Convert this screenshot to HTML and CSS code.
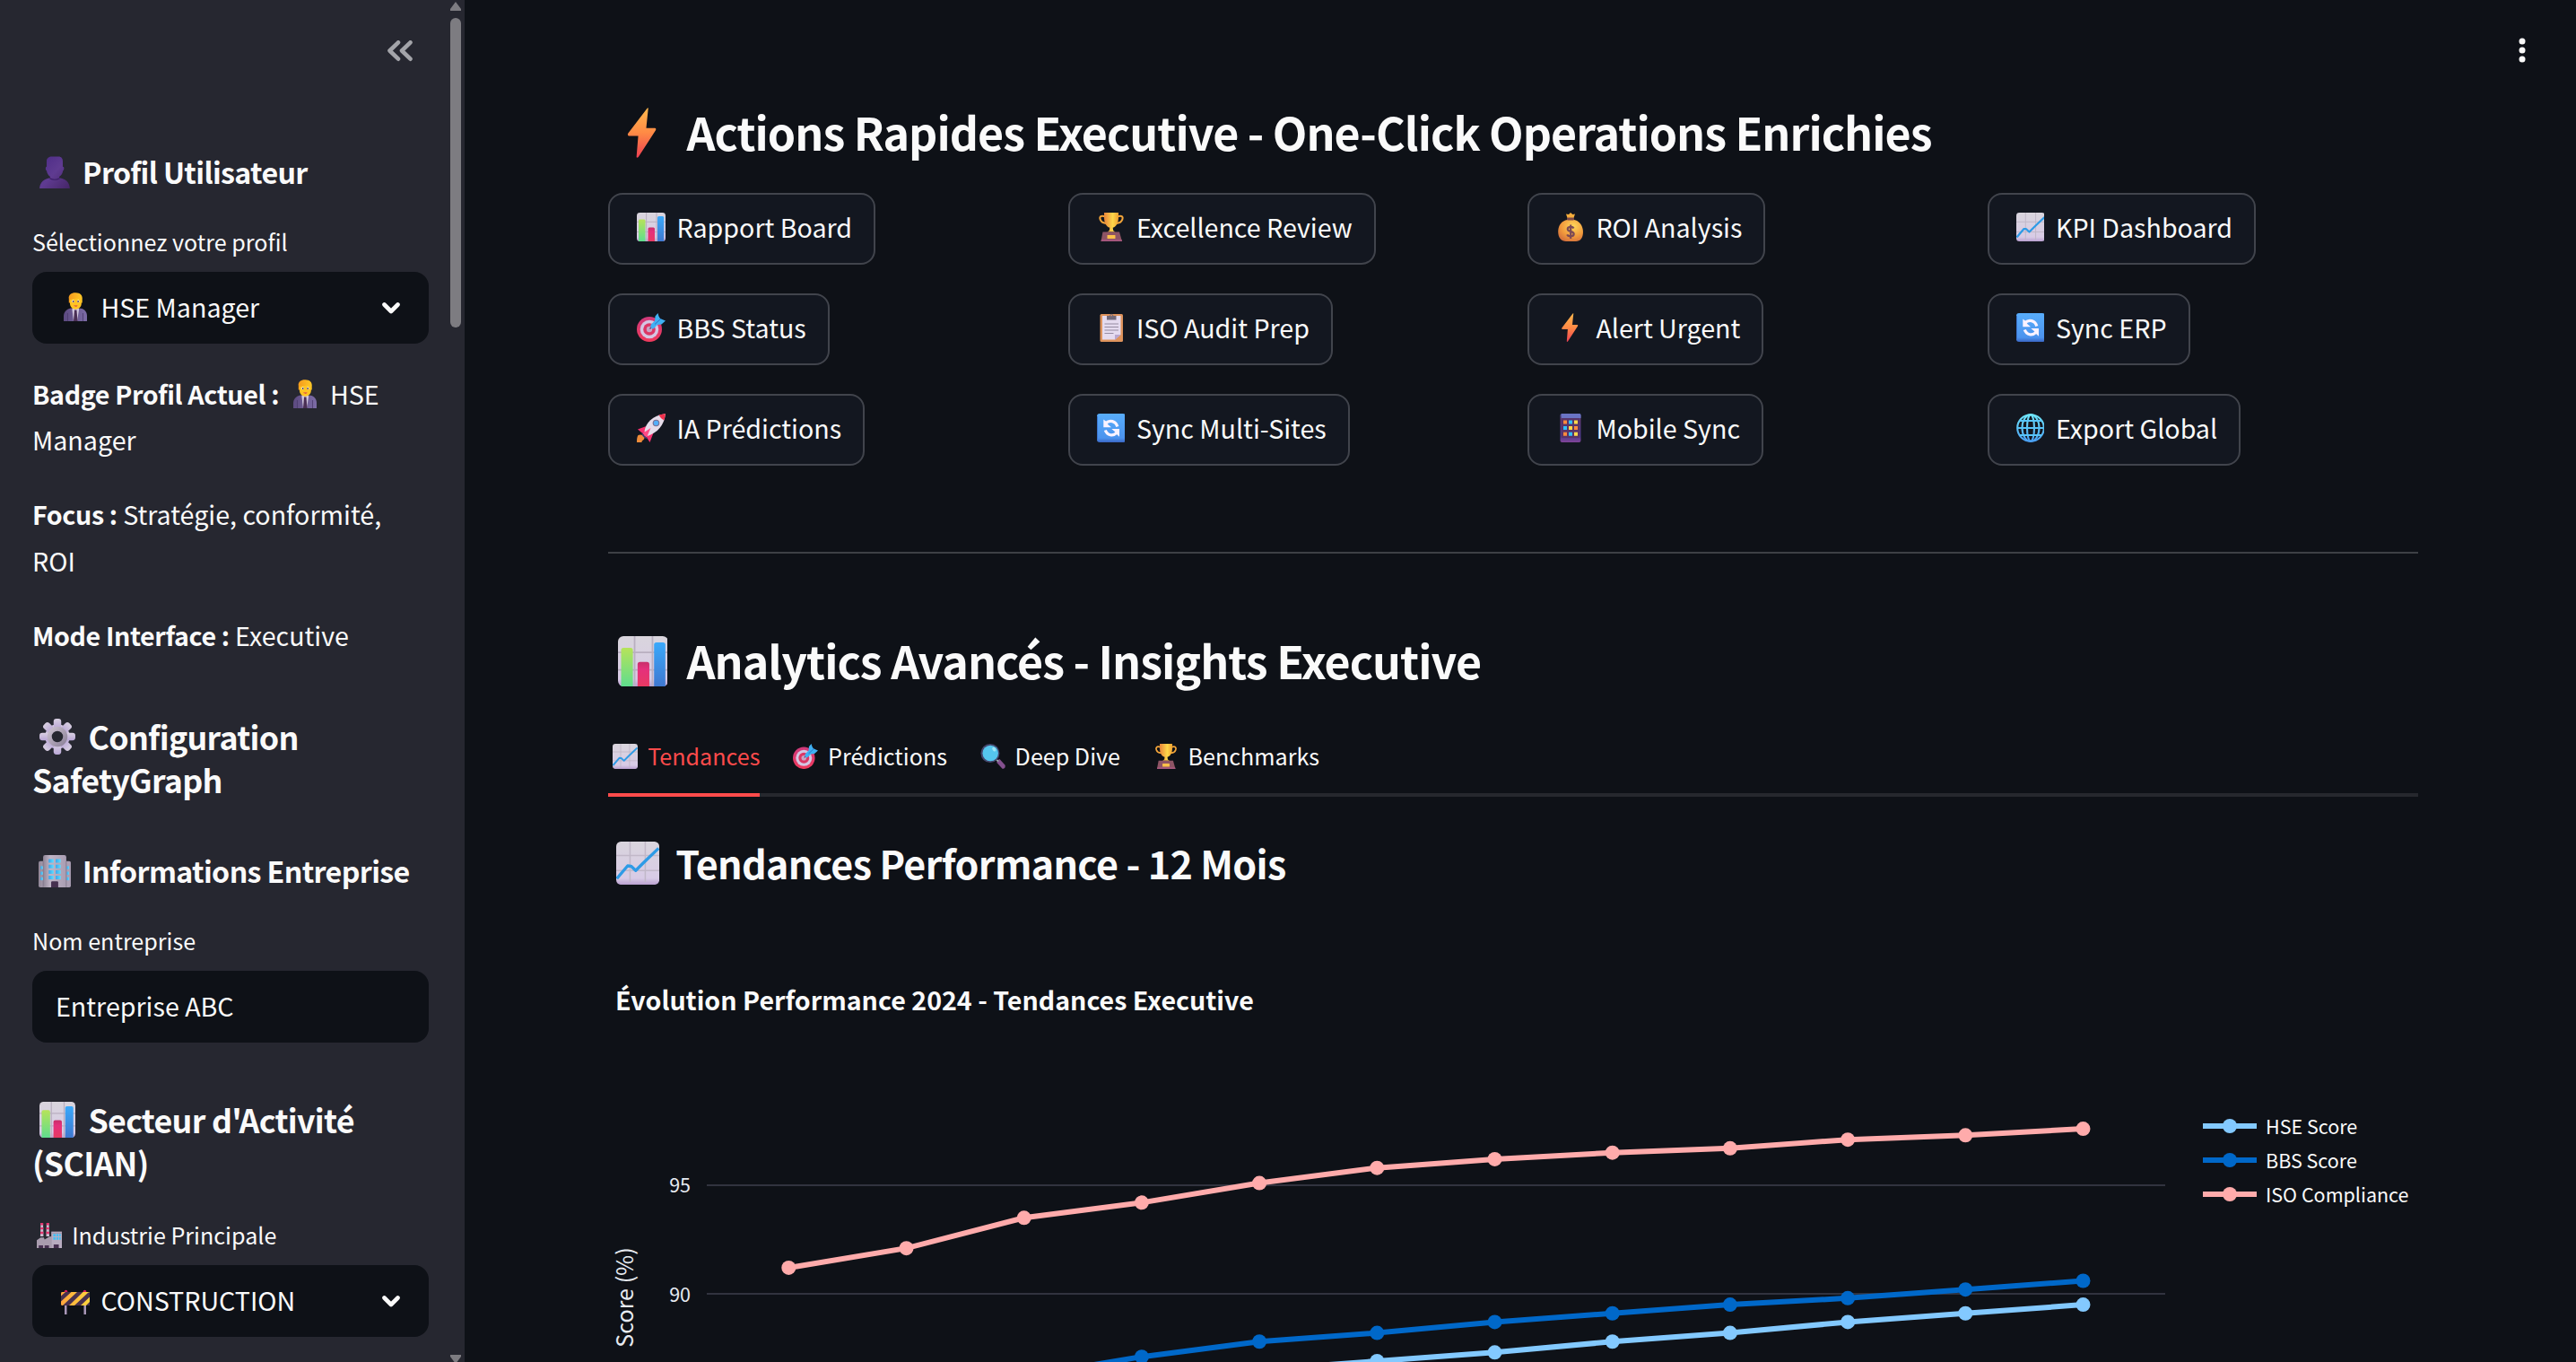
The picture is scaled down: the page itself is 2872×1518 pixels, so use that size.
FILE: index.html
```html
<!DOCTYPE html>
<html lang="fr">
<head>
<meta charset="utf-8">
<title>SafetyGraph</title>
<link rel="stylesheet" href="styles.css">
</head>
<body>
<svg class="sprite" aria-hidden="true">
  <defs>
    <linearGradient id="g-purple" x1="0" y1="0" x2="1" y2="1"><stop offset="0" stop-color="#4b2b86"/><stop offset=".5" stop-color="#5f3b91"/><stop offset="1" stop-color="#452567"/></linearGradient>
    <linearGradient id="g-hair" x1="0" y1="0" x2="1" y2="0"><stop offset="0" stop-color="#f59a1c"/><stop offset="1" stop-color="#ffc928"/></linearGradient>
    <linearGradient id="g-suit" x1="0" y1="0" x2="1" y2="0"><stop offset="0" stop-color="#5c4a80"/><stop offset="1" stop-color="#7c6ca6"/></linearGradient>
    <linearGradient id="g-gear" x1="0" y1="0" x2="0" y2="1"><stop offset="0" stop-color="#d9d0e2"/><stop offset="1" stop-color="#b9a6d6"/></linearGradient>
    <linearGradient id="g-ring" x1="0" y1="0" x2="1" y2="1"><stop offset="0" stop-color="#c9bfce"/><stop offset="1" stop-color="#8f849b"/></linearGradient>
    <linearGradient id="g-wall" x1="0" y1="0" x2="1" y2="0"><stop offset="0" stop-color="#8f8596"/><stop offset=".3" stop-color="#c0b5c6"/><stop offset="1" stop-color="#a99db2"/></linearGradient>
    <linearGradient id="g-win" x1="0" y1="0" x2="1" y2="0"><stop offset="0" stop-color="#36a7ee"/><stop offset="1" stop-color="#5fdcff"/></linearGradient>
    <linearGradient id="g-paper" x1="0" y1="0" x2="0" y2="1"><stop offset="0" stop-color="#d9d5dd"/><stop offset=".85" stop-color="#d8cbe6"/><stop offset="1" stop-color="#b9a0d0"/></linearGradient>
    <linearGradient id="g-green" x1="0" y1="0" x2="0" y2="1"><stop offset="0" stop-color="#b6e35a"/><stop offset="1" stop-color="#5fdd8e"/></linearGradient>
    <linearGradient id="g-pink" x1="0" y1="0" x2="0" y2="1"><stop offset="0" stop-color="#c8306a"/><stop offset=".3" stop-color="#e5307c"/><stop offset="1" stop-color="#e83a62"/></linearGradient>
    <linearGradient id="g-blue" x1="0" y1="0" x2="0" y2="1"><stop offset="0" stop-color="#3aa9fb"/><stop offset="1" stop-color="#3f78d0"/></linearGradient>
    <linearGradient id="g-bolt" x1="0" y1="0" x2="0" y2="1"><stop offset="0" stop-color="#ffb84d"/><stop offset=".5" stop-color="#ff8a45"/><stop offset="1" stop-color="#ee3f52"/></linearGradient>
    <linearGradient id="g-gold" x1="0" y1="0" x2="1" y2="0"><stop offset="0" stop-color="#e8843a"/><stop offset=".6" stop-color="#ffd84a"/><stop offset="1" stop-color="#f0a030"/></linearGradient>
    <radialGradient id="g-bag" cx=".6" cy=".3" r=".8"><stop offset="0" stop-color="#ffd95a"/><stop offset=".6" stop-color="#f0983c"/><stop offset="1" stop-color="#cf6a3c"/></radialGradient>
    <linearGradient id="g-sync" x1="0" y1="0" x2="0" y2="1"><stop offset="0" stop-color="#58adfb"/><stop offset=".85" stop-color="#4c93ee"/><stop offset="1" stop-color="#3a66c4"/></linearGradient>
    <linearGradient id="g-target" x1="0" y1="0" x2="0" y2="1"><stop offset="0" stop-color="#d03a7c"/><stop offset="1" stop-color="#f03a5c"/></linearGradient>
    <linearGradient id="g-phone" x1="0" y1="0" x2="0" y2="1"><stop offset="0" stop-color="#5562b4"/><stop offset=".2" stop-color="#5f3a72"/><stop offset=".8" stop-color="#4d3a8a"/><stop offset="1" stop-color="#83449a"/></linearGradient>
    <linearGradient id="g-globe" x1="0" y1="0" x2="0" y2="1"><stop offset="0" stop-color="#6fe6fb"/><stop offset="1" stop-color="#4a9ff2"/></linearGradient>
    <linearGradient id="g-amber" x1="0" y1="0" x2="1" y2="0"><stop offset="0" stop-color="#ffa63d"/><stop offset="1" stop-color="#ffd53d"/></linearGradient>
  </defs>

  <symbol id="e-user" viewBox="0 0 32 32">
    <path d="M1 32C1 26 6 22 11.500 21.500V20.500C9.300 19 8.200 16.500 8 14.500C6.800 14 6.600 10.500 8 10.500V5C8 2 10.500 .500 13 .500H20C22.500 .500 24 2.500 24 5V10.500C25.800 10.500 25.500 14 24.200 14.500C24 17 22.500 19.200 20.500 20.500V21.500C26.500 22 31 26 31 32Z" fill="url(#g-purple)"/>
    <path d="M11 22c3 1.600 7 1.600 10 0" fill="none" stroke="#3a1e66" stroke-width="1"/>
  </symbol>

  <symbol id="e-worker" viewBox="0 0 32 32">
    <path d="M3 32V26C3 20 9 17.500 12 17.500H20C25 17.500 29 21 29 26V32Z" fill="url(#g-suit)"/>
    <path d="M12.500 17.500h7.500v2L18 32H14L12.500 19.500Z" fill="#d3c9e0"/>
    <path d="M15 19.500h2.500l1 12.500h-4.500Z" fill="#4a2f55"/>
    <path d="M8.800 7C8 2.500 12 0 16.500 .300C21 .300 24.500 3 23.700 8V11.500H8.800Z" fill="url(#g-hair)"/>
    <path d="M10 8C13 7.500 18 6.500 20 6C21 7 22.800 7.500 22.800 8V12.500C22.800 16 19.500 18.700 16.400 18.700C13.200 18.700 10 16 10 12.500Z" fill="#ffc423"/>
    <ellipse cx="13.500" cy="9.800" rx="1.300" ry="1.500" fill="#fff"/><ellipse cx="19.300" cy="9.800" rx="1.300" ry="1.500" fill="#fff"/>
    <circle cx="13.700" cy="10" r=".9" fill="#4a3050"/><circle cx="19.100" cy="10" r=".9" fill="#4a3050"/>
    <path d="M14.200 14.500h4.400c-.8 1.600-3.600 1.600-4.400 0Z" fill="#d6304c"/>
    <path d="M7.500 23v9M24.500 23v9" stroke="#4a3a6c" stroke-width=".8"/>
  </symbol>

  <symbol id="e-gear" viewBox="0 0 32 32">
    <g fill="url(#g-gear)">
      <circle cx="16" cy="16" r="11"/>
      <rect x="12.600" y="0" width="6.800" height="9" rx="2.500"/>
      <rect x="12.600" y="23" width="6.800" height="9" rx="2.500"/>
      <rect x="0" y="12.600" width="9" height="6.800" rx="2.500"/>
      <rect x="23" y="12.600" width="9" height="6.800" rx="2.500"/>
      <rect x="12.600" y="0" width="6.800" height="9" rx="2.500" transform="rotate(45 16 16)"/>
      <rect x="12.600" y="0" width="6.800" height="9" rx="2.500" transform="rotate(135 16 16)"/>
      <rect x="12.600" y="0" width="6.800" height="9" rx="2.500" transform="rotate(225 16 16)"/>
      <rect x="12.600" y="0" width="6.800" height="9" rx="2.500" transform="rotate(315 16 16)"/>
    </g>
    <circle cx="16" cy="16" r="7" fill="#262730" stroke="url(#g-ring)" stroke-width="4"/>
  </symbol>

  <symbol id="e-office" viewBox="0 0 32 32">
    <rect x="0" y="6" width="32" height="26" rx="1.500" fill="url(#g-wall)"/>
    <rect x="4.500" y="0" width="23" height="32" rx="2" fill="url(#g-wall)"/>
    <path d="M4.500 6V32M27.500 6V32" stroke="#81778a" stroke-width=".8"/>
    <g fill="url(#g-win)">
      <rect x="10" y="4" width="5" height="3.600"/><rect x="17" y="4" width="5" height="3.600"/>
      <rect x="10" y="9.500" width="5" height="3.600"/><rect x="17" y="9.500" width="5" height="3.600"/>
      <rect x="10" y="15" width="5" height="3.600"/><rect x="17" y="15" width="5" height="3.600"/>
      <rect x="10" y="20.500" width="5" height="3.600"/><rect x="17" y="20.500" width="5" height="3.600"/>
      <rect x="2" y="11" width="2.200" height="3"/><rect x="2" y="16.500" width="2.200" height="3"/><rect x="2" y="22" width="2.200" height="3"/>
      <rect x="28" y="11" width="2.200" height="3"/><rect x="28" y="16.500" width="2.200" height="3"/><rect x="28" y="22" width="2.200" height="3"/>
    </g>
    <path d="M12.500 32V27Q12.500 26 13.500 26H18.500Q19.500 26 19.500 27V32Z" fill="#46304f"/>
  </symbol>

  <symbol id="e-bars" viewBox="0 0 32 32">
    <rect width="32" height="32" rx="3.500" fill="url(#g-paper)"/>
    <path d="M10.600 0V32M22 0V32M0 10.300H32M0 21.500H32" stroke="#b9afc0" stroke-width="1"/>
    <path d="M2 32V9Q2 7.500 3.500 7.500H8Q9.500 7.500 9.500 9V32Z" fill="url(#g-green)"/>
    <path d="M12.500 32V18Q12.500 16.500 14 16.500H18.500Q20 16.500 20 18V32Z" fill="url(#g-pink)"/>
    <path d="M23 32V5.500Q23 4 24.500 4H28.700Q30.200 4 30.200 5.500V32Z" fill="url(#g-blue)"/>
  </symbol>

  <symbol id="e-trend" viewBox="0 0 32 32">
    <rect width="32" height="32" rx="3.500" fill="url(#g-paper)"/>
    <path d="M10.300 0V30M21.600 0V30M0 10.300H32M0 21.500H32" stroke="#c1b8c8" stroke-width="1"/>
    <path d="M.500 27.500L8.500 18L11 18.200L14.500 21.500L20 16L31.500 5" fill="none" stroke="#2e9be6" stroke-width="2.200" stroke-linejoin="round"/>
  </symbol>

  <symbol id="e-factory" viewBox="0 0 32 32">
    <path d="M4.500 17L5 0H8L8.500 17ZM12 17L12.500 0H15.500L16 17Z" fill="#c9bdd0"/>
    <path d="M4.800 1.500H8.200M4.700 7H8.300M4.600 12.500H8.400M12.300 1.500H15.700M12.200 7H15.800M12.100 12.500H15.900" stroke="#e5336e" stroke-width="2.800"/>
    <path d="M0 32V22L5 18.500H9L10 21L16 17.500L19 17V32Z" fill="#a99cae"/>
    <rect x="18.500" y="11" width="13.500" height="21" fill="#b8acc0"/>
    <path d="M18.500 13H32" stroke="#9e93a8"/>
    <path d="M21 14H24V17H21ZM25 14H27.500V17H25ZM28.500 14H30.500V17H28.500ZM21 18.300H24V21.300H21ZM25 18.300H27.500V21.300H25ZM28.500 18.300H30.500V21.300H28.500Z" fill="#44c0f5"/>
    <path d="M2.500 32V28.500H8V32ZM10 32V28.500H15.500V32ZM21.500 32V27.500H28V32Z" fill="#463050"/>
  </symbol>

  <symbol id="e-barrier" viewBox="0 0 32 32">
    <path d="M4 14H6.500V32H4ZM25.500 14H28V32H25.500Z" fill="#a897b8"/>
    <circle cx="5.500" cy="6.500" r="1.800" fill="#d21f5c"/><circle cx="26.500" cy="6.500" r="1.800" fill="#d21f5c"/>
    <rect y="7" width="32" height="15" rx="1.500" fill="url(#g-amber)"/>
    <path d="M0 11.500L5 7H11.500L0 17.500ZM2 22L18 7H24.500L9 22ZM15 22L30.500 7.500L32 8V12.500L22 22ZM28 22L32 18V22Z" fill="#48304e"/>
  </symbol>

  <symbol id="e-bolt" viewBox="0 0 32 32">
    <path d="M18.500 .600Q19 0 19.300 .300L18 13H23.600Q24.600 13.300 24 14.500L13 31.500Q12 32.400 11.800 31.500L12.900 18H6.800Q5.800 17.500 6.500 16.300Z" fill="url(#g-bolt)"/>
  </symbol>

  <symbol id="e-trophy" viewBox="0 0 32 32">
    <path d="M9 4.300C4 2.500 2.500 5 3.800 8C5 11 8 12 11 11.500M23 4.300C28 2.500 29.500 5 28.200 8C27 11 24 12 21 11.500" fill="none" stroke="#f3a53a" stroke-width="2"/>
    <path d="M8 0H24V5C24 11 22 15.500 17.700 16.800L18.200 20L20.500 21.500H11.500L13.800 20L14.300 16.800C10 15.500 8 11 8 5Z" fill="url(#g-gold)"/>
    <path d="M6.500 21.500H25L28 32H4.500Z" fill="#8e5464"/><path d="M5 30H27.500L28 32H4.500Z" fill="#a5577c"/>
    <rect x="11.500" y="25" width="9" height="4" rx=".6" fill="#fcc04a"/>
  </symbol>

  <symbol id="e-money" viewBox="0 0 32 32">
    <path d="M11 1.500L14 2L16 0L18.500 2L21 1.500L19.500 6H12.500Z" fill="#f6ad3c"/>
    <path d="M12.500 8C5 9 2 16 2.200 21.500C2.200 28 6 32 11 32H22C27 32 30 28 30 21.500C30 15 26 9 20 8Z" fill="url(#g-bag)"/>
    <rect x="12" y="5.500" width="8" height="3" rx="1.300" fill="#7d4a48"/>
    <path d="M19.500 17.500C18.500 15 12.500 15.500 12.800 18.500C13 22 19.700 20 19.700 23.700C19.700 27 13.300 27 12.300 24.300M16.200 13.500V29" fill="none" stroke="#7b4a55" stroke-width="2.200"/>
  </symbol>

  <symbol id="e-target" viewBox="0 0 32 32">
    <circle cx="14" cy="18" r="14" fill="url(#g-target)"/><circle cx="14" cy="18" r="10.300" fill="#d5c6e2"/>
    <circle cx="14" cy="18" r="6.800" fill="#dc3765"/><circle cx="14" cy="18" r="3.200" fill="#c9a5c4"/>
    <path d="M14.500 17.500L21 11" stroke="#5a3a80" stroke-width="1.300"/>
    <path d="M15.500 13L20 8.500L20.500 3.500L23.500 0L24.500 3.500L26 6L32 8.500L27.500 12.500L23 13L18.500 17.500Q15 18 15.500 13Z" fill="#3fb0f3"/>
    <path d="M20 12.500L27 6" stroke="#2a6fc4" stroke-width="1"/>
  </symbol>

  <symbol id="e-clipboard" viewBox="0 0 32 32">
    <rect x="3.500" y="1" width="25.500" height="31" rx="1.500" fill="#de935c"/>
    <path d="M6 3H26.500V24L20 29.500H6Z" fill="#e5dbef"/><path d="M26.500 24L20 30V24Z" fill="#b9a6cf"/>
    <path d="M11 3H14Q16 -1.500 18.500 3H21.500V7.500H11Z" fill="#71697a"/><circle cx="16.200" cy="2.400" r=".9" fill="#de935c"/>
    <path d="M8.500 12H24M8.500 15.500H24M8.500 19H24M8.500 22.500H18.500" stroke="#968ca2" stroke-width="1.100"/>
  </symbol>

  <symbol id="e-sync" viewBox="0 0 32 32">
    <rect width="32" height="32" rx="3" fill="url(#g-sync)"/><path d="M.500 3V29" stroke="#3b74cf"/>
    <path d="M10 10.500C14 6.800 21 8 22.800 14.500M22 21.500C18 25.500 11.500 24.500 9.300 18.500" fill="none" stroke="#fbf3ff" stroke-width="3.200"/>
    <path d="M7.300 6.500V15.200H16L12.500 12.200L10 8.500ZM25 25.700V17H16.300L19.800 20L22.500 23.500Z" fill="#fbf3ff"/>
  </symbol>

  <symbol id="e-rocket" viewBox="0 0 32 32">
    <path d="M1.500 24C4 22.500 8.500 24 8.500 27C8 30 5.500 29.500 5.500 32H0C0 30 0 26 1.500 24Z" fill="#f08c3a"/>
    <path d="M1 17.500L10.500 14L9 24Q5 21 1 17.500ZM14.500 32L18.500 21.500L8 23.500Q12 27.500 14.500 32Z" fill="#f5316f"/>
    <path d="M8.500 20C10 10 17 2.500 32 0C30.500 13.500 23 21 12 25Z" fill="#e6dcea"/>
    <path d="M24.500 1.500L32 0Q31.500 4 30.300 7.500Q26.500 5.500 24.500 1.500Z" fill="#f0304c"/>
    <circle cx="21.500" cy="10.500" r="3.800" fill="#7a6e94"/><circle cx="21.500" cy="10.500" r="2.700" fill="#53aef8"/>
    <path d="M6.500 22L15.500 16L11 26.500Q8 25 6.500 22Z" fill="#ff4b86"/><path d="M6.500 21.500Q7.500 26 12.500 27L11 28Q6 26.500 5.500 22Z" fill="#4a3a78"/>
  </symbol>

  <symbol id="e-phone" viewBox="0 0 32 32">
    <rect x="4.500" width="23" height="32" rx="2" fill="url(#g-phone)"/>
    <path d="M6 0H26Q27.500 0 27.500 2V5H6Z" fill="#6a74c4"/>
    <rect x="6" y="5" width="20" height="22" fill="#583468"/>
    <path d="M8 7.500H12V11.500H8ZM20 14H24V18H20ZM8 20.700H12V24.700H8Z" fill="#ff8a3c"/>
    <path d="M14 7.500H18V11.500H14ZM8 14H12V18H8ZM14 20.700H18V24.700H14Z" fill="#2fc0ff"/>
    <path d="M20 7.500H24V11.500H20ZM14 14H18V18H14ZM20 20.700H24V24.700H20Z" fill="#ffd94a"/>
  </symbol>

  <symbol id="e-globe" viewBox="0 0 32 32">
    <g fill="none" stroke="url(#g-globe)" stroke-width="2.100">
      <circle cx="16" cy="16" r="14.800"/><ellipse cx="16" cy="16" rx="9.500" ry="14.800"/><ellipse cx="16" cy="16" rx="4" ry="14.800"/>
      <path d="M3.500 8H28.500M3.500 24H28.500"/>
    </g>
    <path d="M1 16H31M3.500 8H28.500M3.500 24H28.500" stroke="#58c4f7" stroke-width="2.100"/>
  </symbol>

  <symbol id="e-search" viewBox="0 0 32 32">
    <path d="M21.500 21L24.500 19.500L31.500 27Q32.500 31.500 28 31.800L21 24Z" fill="#84508f"/><path d="M20.500 20L23 22.500" stroke="#9aa" stroke-width="2"/>
    <circle cx="12.500" cy="12" r="12" fill="#45476e"/><circle cx="12.800" cy="12" r="10" fill="#55c6ee"/>
    <ellipse cx="17.500" cy="7" rx="2" ry="3" fill="#9fe6f8" transform="rotate(-35 17.500 7)"/>
  </symbol>
</svg>

<div class="app">
  <aside class="sidebar">
    <div class="sidebar-content">
      <div class="sidebar-header">
        <svg class="collapse" viewBox="0 0 28 24"><path d="M12 2.300L2.500 11.500L12 20.700M25.500 2.300L16 11.500L25.500 20.700"/></svg>
      </div>

      <h4 class="side-h4 first"><svg class="emoji"><use href="#e-user"/></svg> Profil Utilisateur</h4>
      <label class="label">Sélectionnez votre profil</label>
      <div class="field select"><span><svg class="emoji"><use href="#e-worker"/></svg> HSE Manager</span>
        <svg class="chevron" viewBox="0 0 20 13"><path d="M2.500 2.500L10 10L17.500 2.500"/></svg></div>

      <div class="prose">
        <p><strong>Badge Profil Actuel :</strong> <svg class="emoji"><use href="#e-worker"/></svg> HSE Manager</p>
        <p><strong>Focus :</strong> Stratégie, conformité, ROI</p>
        <p><strong>Mode Interface :</strong> Executive</p>
      </div>

      <h3 class="side-h3"><svg class="emoji"><use href="#e-gear"/></svg> Configuration SafetyGraph</h3>

      <h4 class="side-h4 company"><svg class="emoji"><use href="#e-office"/></svg> Informations Entreprise</h4>
      <label class="label">Nom entreprise</label>
      <div class="field">Entreprise ABC</div>

      <h3 class="side-h3 sector"><svg class="emoji"><use href="#e-bars"/></svg> Secteur d'Activité (SCIAN)</h3>
      <label class="label industry"><svg class="emoji"><use href="#e-factory"/></svg> Industrie Principale</label>
      <div class="field select"><span><svg class="emoji"><use href="#e-barrier"/></svg> CONSTRUCTION</span>
        <svg class="chevron" viewBox="0 0 20 13"><path d="M2.500 2.500L10 10L17.500 2.500"/></svg></div>
    </div>
    <div class="scrollbar">
      <svg class="arrow" viewBox="0 0 12 10"><path d="M6 0L12 8V10H0V8Z"/></svg>
      <div class="thumb"></div>
      <svg class="arrow down" viewBox="0 0 12 10"><path d="M6 10L12 2V0H0V2Z"/></svg>
    </div>
  </aside>

  <main class="main">
    <svg class="kebab" viewBox="0 0 8 28"><circle cx="4" cy="4" r="3.500"/><circle cx="4" cy="14" r="3.500"/><circle cx="4" cy="24" r="3.500"/></svg>

    <h2 class="title"><svg class="emoji"><use href="#e-bolt"/></svg> Actions Rapides Executive - One-Click Operations Enrichies</h2>

    <div class="actions">
      <button class="btn"><svg class="emoji"><use href="#e-bars"/></svg> Rapport Board</button>
      <button class="btn"><svg class="emoji"><use href="#e-trophy"/></svg> Excellence Review</button>
      <button class="btn"><svg class="emoji"><use href="#e-money"/></svg> ROI Analysis</button>
      <button class="btn"><svg class="emoji"><use href="#e-trend"/></svg> KPI Dashboard</button>
      <button class="btn"><svg class="emoji"><use href="#e-target"/></svg> BBS Status</button>
      <button class="btn"><svg class="emoji"><use href="#e-clipboard"/></svg> ISO Audit Prep</button>
      <button class="btn"><svg class="emoji"><use href="#e-bolt"/></svg> Alert Urgent</button>
      <button class="btn"><svg class="emoji"><use href="#e-sync"/></svg> Sync ERP</button>
      <button class="btn"><svg class="emoji"><use href="#e-rocket"/></svg> IA Prédictions</button>
      <button class="btn"><svg class="emoji"><use href="#e-sync"/></svg> Sync Multi-Sites</button>
      <button class="btn"><svg class="emoji"><use href="#e-phone"/></svg> Mobile Sync</button>
      <button class="btn"><svg class="emoji"><use href="#e-globe"/></svg> Export Global</button>
    </div>

    <hr class="divider">

    <h2 class="title analytics"><svg class="emoji"><use href="#e-bars"/></svg> Analytics Avancés - Insights Executive</h2>

    <nav class="tabs">
      <a class="tab active"><svg class="emoji"><use href="#e-trend"/></svg> Tendances</a>
      <a class="tab"><svg class="emoji"><use href="#e-target"/></svg> Prédictions</a>
      <a class="tab"><svg class="emoji"><use href="#e-search"/></svg> Deep Dive</a>
      <a class="tab"><svg class="emoji"><use href="#e-trophy"/></svg> Benchmarks</a>
    </nav>

    <h3 class="subtitle"><svg class="emoji"><use href="#e-trend"/></svg> Tendances Performance - 12 Mois</h3>

    <svg class="chart" viewBox="678 990 2018 528">
      <text class="chart-title" x="686" y="1126">Évolution Performance 2024 - Tendances Executive</text>
      <path class="grid" d="M788 1321H2414M788 1442H2414"/>
      <text class="tick" x="770" y="1329">95</text>
      <text class="tick" x="770" y="1451">90</text>
      <text class="axis" transform="translate(706 1446) rotate(-90)">Score (%)</text>
      <g id="series"></g>
      <text class="legend" x="2526" y="1264">HSE Score</text>
      <text class="legend" x="2526" y="1302">BBS Score</text>
      <text class="legend" x="2526" y="1340">ISO Compliance</text>
    </svg>
  </main>
</div>
<script src="chart.js"></script>
</body>
</html>
```
FILE: styles.css
```css
* { box-sizing: border-box; }

body {
  margin: 0;
  height: 1518px;
  overflow: hidden;
  background: #0e1117;
  color: #fafafa;
  font-family: "Noto Sans CJK SC", "Noto Sans", sans-serif;
  font-size: 28.64px;
}

h2, h3, h4, p { margin: 0; }
.sprite { position: absolute; width: 0; height: 0; }

.app { display: flex; height: 1518px; }

.emoji {
  width: 1.117em;
  height: 1.117em;
  margin: 0 .21em;
  vertical-align: -.15em;
}

/* Sidebar */
.sidebar {
  display: flex;
  flex: 0 0 518px;
  height: 1518px;
  overflow: hidden;
  background: #262730;
}
.sidebar-content { flex: 0 0 502px; padding: 45px 24px 0 36px; }
.sidebar-header { display: flex; justify-content: flex-end; height: 24px; padding-right: 18px; }
.collapse { width: 28px; height: 24px; }
.collapse path {
  fill: none;
  stroke: #a3a4a9;
  stroke-width: 4.6;
  stroke-linecap: round;
  stroke-linejoin: round;
}

.side-h4 { font-size: 32.2px; line-height: 43px; font-weight: 700; letter-spacing: -.02em; white-space: nowrap; }
.side-h4.first { margin-top: 101px; }
.side-h4.company { margin-top: 57px; }
.side-h3 { margin-top: 63px; font-size: 35.8px; line-height: 48px; font-weight: 700; letter-spacing: -.02em; }
.side-h3.sector { margin-top: 61px; }

.label {
  display: block;
  margin-top: 35px;
  font-size: 25.1px;
  line-height: 42px;
}
.label.industry { margin-top: 36px; }
.field {
  display: flex;
  align-items: center;
  width: 442px;
  height: 80px;
  margin-top: 13px;
  padding: 0 26px 3px;
  border-radius: 16px;
  background: #0e1117;
}
.select { justify-content: space-between; padding-right: 32px; }
.chevron { width: 20px; height: 13px; margin-top: 3px; }
.chevron path {
  fill: none;
  stroke: #fafafa;
  stroke-width: 4.6;
  stroke-linecap: round;
  stroke-linejoin: round;
}

.prose { display: flex; flex-direction: column; gap: 32px; margin-top: 30px; line-height: 51.2px; }
.prose strong { letter-spacing: -.0135em; }

.scrollbar {
  display: flex;
  flex-direction: column;
  flex: 0 0 12px;
  height: 1526px;
  padding-top: 2px;
}
.arrow { flex: none; width: 12px; height: 10px; fill: #7d7c81; }
.arrow.down { margin-top: 1145px; }
.thumb { flex: none; height: 345px; margin-top: 8px; border-radius: 6px; background: #7d7c81; }

/* Main column */
.main { position: relative; flex: 1; height: 1518px; padding: 113px 0 0 160px; overflow: hidden; }
.kebab { position: absolute; top: 42px; right: 56px; width: 8px; height: 28px; fill: #fafafa; }

.title { width: 2018px; font-size: 50.1px; line-height: 67px; font-weight: 700; letter-spacing: -.019em; white-space: nowrap; }
.title.analytics { margin-top: 85px; }

.actions {
  display: grid;
  grid-template-columns: repeat(4, 1fr);
  gap: 32px;
  width: 2018px;
  margin-top: 35px;
  justify-items: start;
}
.btn {
  height: 80px;
  padding: 0 24px 5px;
  border: 2px solid #41444c;
  border-radius: 16px;
  background: #131720;
  color: #fafafa;
  font: inherit;
  white-space: nowrap;
}

.divider { width: 2018px; height: 2px; margin: 96px 0 0; border: 0; background: #3d4045; }

.tabs {
  display: flex;
  gap: 31.5px;
  width: 2018px;
  height: 68px;
  margin-top: 51px;
  font-size: 25.1px;
  line-height: 45px;
  box-shadow: inset 0 -4px #26282e;
}
.tab { color: #fafafa; white-space: nowrap; }
.tab.active { color: #ff4b4b; box-shadow: inset 0 -4px #ff4b4b; }

.subtitle { margin-top: 44px; font-size: 43px; line-height: 58px; font-weight: 700; letter-spacing: -.0155em; }

/* Chart */
.chart { display: block; width: 2018px; height: 528px; fill: #fafafa; }
.chart-title { font-size: 28.6px; font-weight: 700; }
.grid { fill: none; stroke: #31333f; stroke-width: 2; }
.tick { fill: #e6eaf1; font-size: 21.5px; text-anchor: end; }
.axis { fill: #e6eaf1; font-size: 25.1px; text-anchor: middle; }
.legend { font-size: 21.5px; }
.line { fill: none; stroke-width: 6; }
.hse { stroke: #83c9ff; fill: #83c9ff; }
.bbs { stroke: #0068c9; fill: #0068c9; }
.iso { stroke: #ffabab; fill: #ffabab; }
.line.hse, .line.bbs, .line.iso { fill: none; }
.dot { stroke: none; }
```
FILE: chart.js
```js
const NS = 'http://www.w3.org/2000/svg';
const group = document.getElementById('series');
const series = [
  { cls: 'hse', values: [84.2, 84.8, 85.3, 85.9, 86.5, 86.9, 87.3, 87.8, 88.2, 88.7, 89.1, 89.5] },
  { cls: 'bbs', values: [84.5, 85.3, 86.2, 87.1, 87.8, 88.2, 88.7, 89.1, 89.5, 89.8, 90.2, 90.6] },
  { cls: 'iso', values: [91.2, 92.1, 93.5, 94.2, 95.1, 95.8, 96.2, 96.5, 96.7, 97.1, 97.3, 97.6] },
];
const px = i => 879.3 + i * 131.2;
const py = v => 1321 - (v - 95) * 24.2;

function add(tag, attrs) {
  const el = document.createElementNS(NS, tag);
  for (const key in attrs) el.setAttribute(key, attrs[key]);
  group.appendChild(el);
}

series.forEach((s, n) => {
  const points = s.values.map((v, i) => [px(i), py(v)]);
  add('path', { class: `line ${s.cls}`, d: 'M' + points.map(p => p.join(' ')).join('L') });
  points.forEach(p => add('circle', { class: `dot ${s.cls}`, cx: p[0], cy: p[1], r: 8 }));
  const y = 1255 + n * 38;
  add('path', { class: `line ${s.cls}`, d: `M2456 ${y}H2516` });
  add('circle', { class: `dot ${s.cls}`, cx: 2486, cy: y, r: 8 });
});
```
